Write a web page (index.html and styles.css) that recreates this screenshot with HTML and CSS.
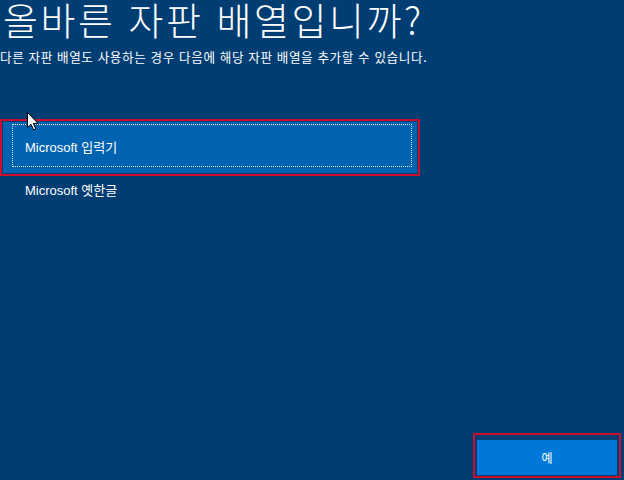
FILE: index.html
```html
<!DOCTYPE html>
<html lang="ko">
<head>
<meta charset="utf-8">
<title>자판 배열</title>
<link rel="stylesheet" href="styles.css">
</head>
<body>
<div class="page">
  <h1 class="title">올바른 자판 배열입니까?</h1>
  <p class="subtitle">다른 자판 배열도 사용하는 경우 다음에 해당 자판 배열을 추가할 수 있습니다.</p>
  <div class="list">
    <div class="mark">
      <div class="item selected">
        <div class="focus">Microsoft 입력기</div>
      </div>
    </div>
    <div class="item">Microsoft 옛한글</div>
  </div>
  <div class="footer">
    <div class="mark mark-btn">
      <button class="btn">예</button>
    </div>
  </div>
  <svg class="cursor" width="12" height="19" viewBox="0 0 12 19">
    <path d="M0.5 0.5 L0.5 15.5 L4 12.2 L6.6 18 L8.8 17 L6.3 11.4 L11 11.4 Z" fill="#ffffff" stroke="#000000" stroke-width="1"/>
  </svg>
</div>
</body>
</html>
```

FILE: styles.css
```css
html, body {
  margin: 0;
  padding: 0;
}
body {
  background: #003d73;
  color: #ffffff;
  font-family: "Liberation Sans", "Noto Sans CJK KR", sans-serif;
  overflow: hidden;
}
.page {
  position: relative;
  width: 624px;
  height: 480px;
  display: flex;
  flex-direction: column;
}
.title {
  margin: 0 0 0 3px;
  font-family: "Noto Sans CJK KR", sans-serif;
  font-weight: 300;
  font-size: 38px;
  letter-spacing: 2.5px;
  line-height: 37px;
  white-space: nowrap;
}
.subtitle {
  margin: 11px 0 0 0;
  font-family: "Noto Sans CJK KR", sans-serif;
  font-size: 12.6px;
  letter-spacing: 0.6px;
  line-height: 18px;
  white-space: nowrap;
}
.list {
  margin-top: 53px;
  width: 420px;
}
.mark {
  border: 2px solid #c8102e;
  padding: 1px;
}
.item {
  font-size: 13px;
  height: 51px;
  display: flex;
  align-items: center;
  padding-left: 25px;
}
.item.selected {
  background: #0063b1;
  padding: 2px 5px 6px 9px;
  box-sizing: border-box;
  align-items: stretch;
}
.focus {
  flex: 1;
  border: 1px dotted #e8eef5;
  display: flex;
  align-items: center;
  padding-left: 12px;
  padding-top: 1px;
}
.item:not(.selected) {
  height: 30px;
  margin-top: -2px;
}
.footer {
  margin-top: auto;
  display: flex;
  justify-content: flex-end;
  padding: 0 3px 2px 0;
}
.mark-btn {
  padding: 5px 2px 1px 2px;
  width: 140px;
  height: 35px;
}
.btn {
  display: block;
  width: 140px;
  height: 35px;
  border: 0;
  background: #0078d7;
  color: #ffffff;
  font-family: "Noto Sans CJK KR", sans-serif;
  font-size: 12px;
  padding: 0;
}
.cursor {
  position: absolute;
  left: 27px;
  top: 112px;
}
```
